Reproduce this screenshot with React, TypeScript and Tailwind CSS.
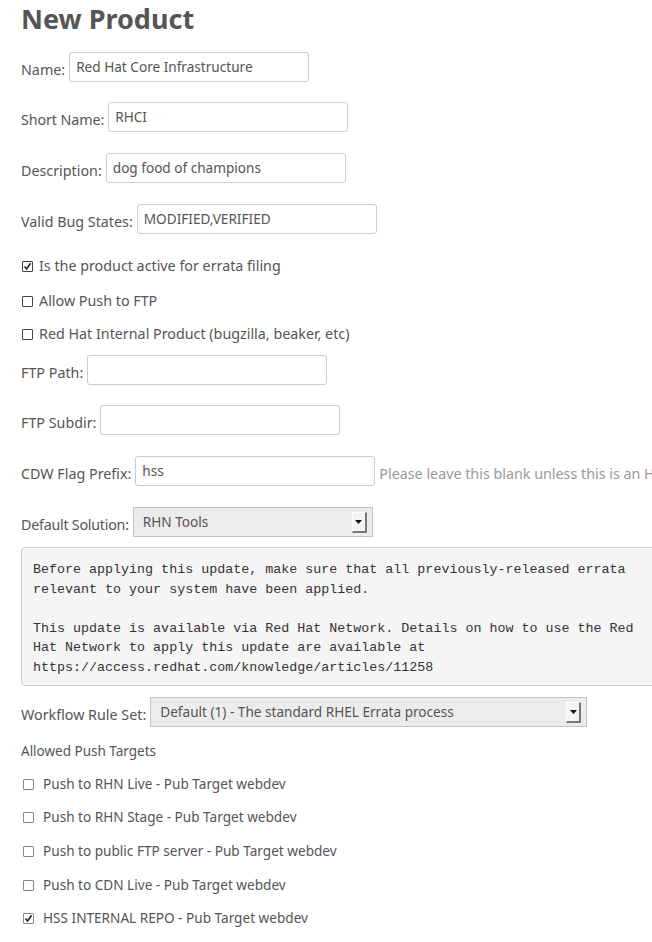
import React from "react";

const font = { fontFamily: '"Noto Sans", "Open Sans", sans-serif' };

function TextInput({ value, width = "w-[240px]" }: { value?: string; width?: string }) {
  return (
    <div
      className={`${width} h-[30px] shrink-0 rounded-[3px] border border-[#cccccc] bg-white pl-[6px] text-[13.6px] leading-[27px] text-[#555555] whitespace-nowrap overflow-hidden`}
    >
      {value}
    </div>
  );
}

function Row({
  label,
  children,
  mt,
  labelClass = "",
}: {
  label: string;
  children: React.ReactNode;
  mt: string;
  labelClass?: string;
}) {
  return (
    <div className={`flex items-start h-[30px] ${mt}`}>
      <span className={`pt-[8px] leading-[20px] text-[14.3px] text-[#555555] whitespace-nowrap mr-[4px] ${labelClass}`}>
        {label}
      </span>
      {children}
    </div>
  );
}

function Check({ checked, dark }: { checked?: boolean; dark?: boolean }) {
  return (
    <span
      className={`relative inline-flex items-center justify-center w-[11px] h-[11px] shrink-0 rounded-[1px] bg-white border ${
        dark ? "border-[#444444]" : "border-[#8a8a8a]"
      }`}
    >
      {checked && (
        <svg width="9" height="9" viewBox="0 0 9 9" className="absolute left-[0px] top-[0px]">
          <path d="M1.5 4.5 L3.6 7 L7.6 1.2" stroke="#222222" strokeWidth="1.6" fill="none" />
        </svg>
      )}
    </span>
  );
}

function SelectBox({ value, width }: { value: string; width: string }) {
  return (
    <div
      className={`${width} h-[30px] shrink-0 flex items-center justify-between border border-[#c4c4c4] bg-[#ececec] pl-[9px] pr-[5px] text-[13.6px] text-[#555555]`}
    >
      <span className="whitespace-nowrap">{value}</span>
      <span className="flex items-center justify-center w-[15px] h-[21px] bg-[#f4f4f4] border-t border-l border-t-white border-l-white border-r-2 border-b-2 border-r-[#777777] border-b-[#777777]">
        <svg width="7" height="4" viewBox="0 0 7 4">
          <path d="M0 0 L7 0 L3.5 4 Z" fill="#111111" />
        </svg>
      </span>
    </div>
  );
}

export default function App() {
  return (
    <div className="w-[652px] h-[942px] overflow-hidden bg-white" style={font}>
      <div className="pl-[21px]">
        <h1 className="pt-[1px] text-[27px] leading-[36px] font-bold text-[#555555]">New Product</h1>

        <Row label="Name:" mt="mt-[15px]">
          <TextInput value="Red Hat Core Infrastructure" />
        </Row>
        <Row label="Short Name:" mt="mt-[20px]" labelClass="tracking-[-0.1px]">
          <TextInput value="RHCI" />
        </Row>
        <Row label="Description:" mt="mt-[21px]">
          <TextInput value="dog food of champions" />
        </Row>
        <Row label="Valid Bug States:" mt="mt-[21px]">
          <TextInput value="MODIFIED,VERIFIED" />
        </Row>

        <div className="mt-[22px] flex items-center h-[20px] text-[14.3px] text-[#555555]">
          <span className="ml-[1px] mr-[6px] flex"><Check checked dark /></span>
          <span>Is the product active for errata filing</span>
        </div>
        <div className="mt-[15px] flex items-center h-[20px] text-[14.3px] text-[#555555]">
          <span className="ml-[1px] mr-[6px] flex"><Check dark /></span>
          <span>Allow Push to FTP</span>
        </div>
        <div className="mt-[13px] flex items-center h-[20px] text-[14.3px] text-[#555555]">
          <span className="ml-[1px] mr-[6px] flex"><Check dark /></span>
          <span>Red Hat Internal Product (bugzilla, beaker, etc)</span>
        </div>

        <Row label="FTP Path:" mt="mt-[11px]">
          <TextInput />
        </Row>
        <Row label="FTP Subdir:" mt="mt-[20px]">
          <TextInput />
        </Row>
        <Row label="CDW Flag Prefix:" mt="mt-[21px]">
          <TextInput value="hss" />
          <span className="ml-[4px] pt-[8px] leading-[20px] text-[14.3px] text-[#999999] whitespace-nowrap">
            Please leave this blank unless this is an HSS product
          </span>
        </Row>
        <Row label="Default Solution:" mt="mt-[21px]" labelClass="tracking-[-0.25px]">
          <SelectBox value="RHN Tools" width="w-[240px]" />
        </Row>

        <pre
          className="mt-[10px] w-[660px] rounded-[4px] border border-[#cccccc] bg-[#f5f5f5] pl-[11px] pr-[11px] pt-[12px] pb-[8px] text-[13.35px] leading-[19.5px] text-[#333333] whitespace-pre"
          style={{ fontFamily: '"Liberation Mono", "Courier New", monospace' }}
        >
{`Before applying this update, make sure that all previously-released errata
relevant to your system have been applied.

This update is available via Red Hat Network. Details on how to use the Red
Hat Network to apply this update are available at
https://access.redhat.com/knowledge/articles/11258`}
        </pre>

        <Row label="Workflow Rule Set:" mt="mt-[11px]">
          <SelectBox value="Default (1) - The standard RHEL Errata process" width="w-[437px]" />
        </Row>

        <div className="mt-[14px] h-[20px] leading-[20px] text-[13.5px] text-[#555555]">Allowed Push Targets</div>

        {[
          ["Push to RHN Live - Pub Target webdev", false, "mt-[13px]"],
          ["Push to RHN Stage - Pub Target webdev", false, "mt-[13px]"],
          ["Push to public FTP server - Pub Target webdev", false, "mt-[14px]"],
          ["Push to CDN Live - Pub Target webdev", false, "mt-[14px]"],
          ["HSS INTERNAL REPO - Pub Target webdev", true, "mt-[13px]"],
        ].map(([label, checked, mt]) => (
          <div key={label as string} className={`${mt} flex items-center h-[20px] text-[13.6px] text-[#555555]`}>
            <span className="ml-[2px] mr-[9px] flex"><Check checked={checked as boolean} /></span>
            <span>{label as string}</span>
          </div>
        ))}
      </div>
    </div>
  );
}
